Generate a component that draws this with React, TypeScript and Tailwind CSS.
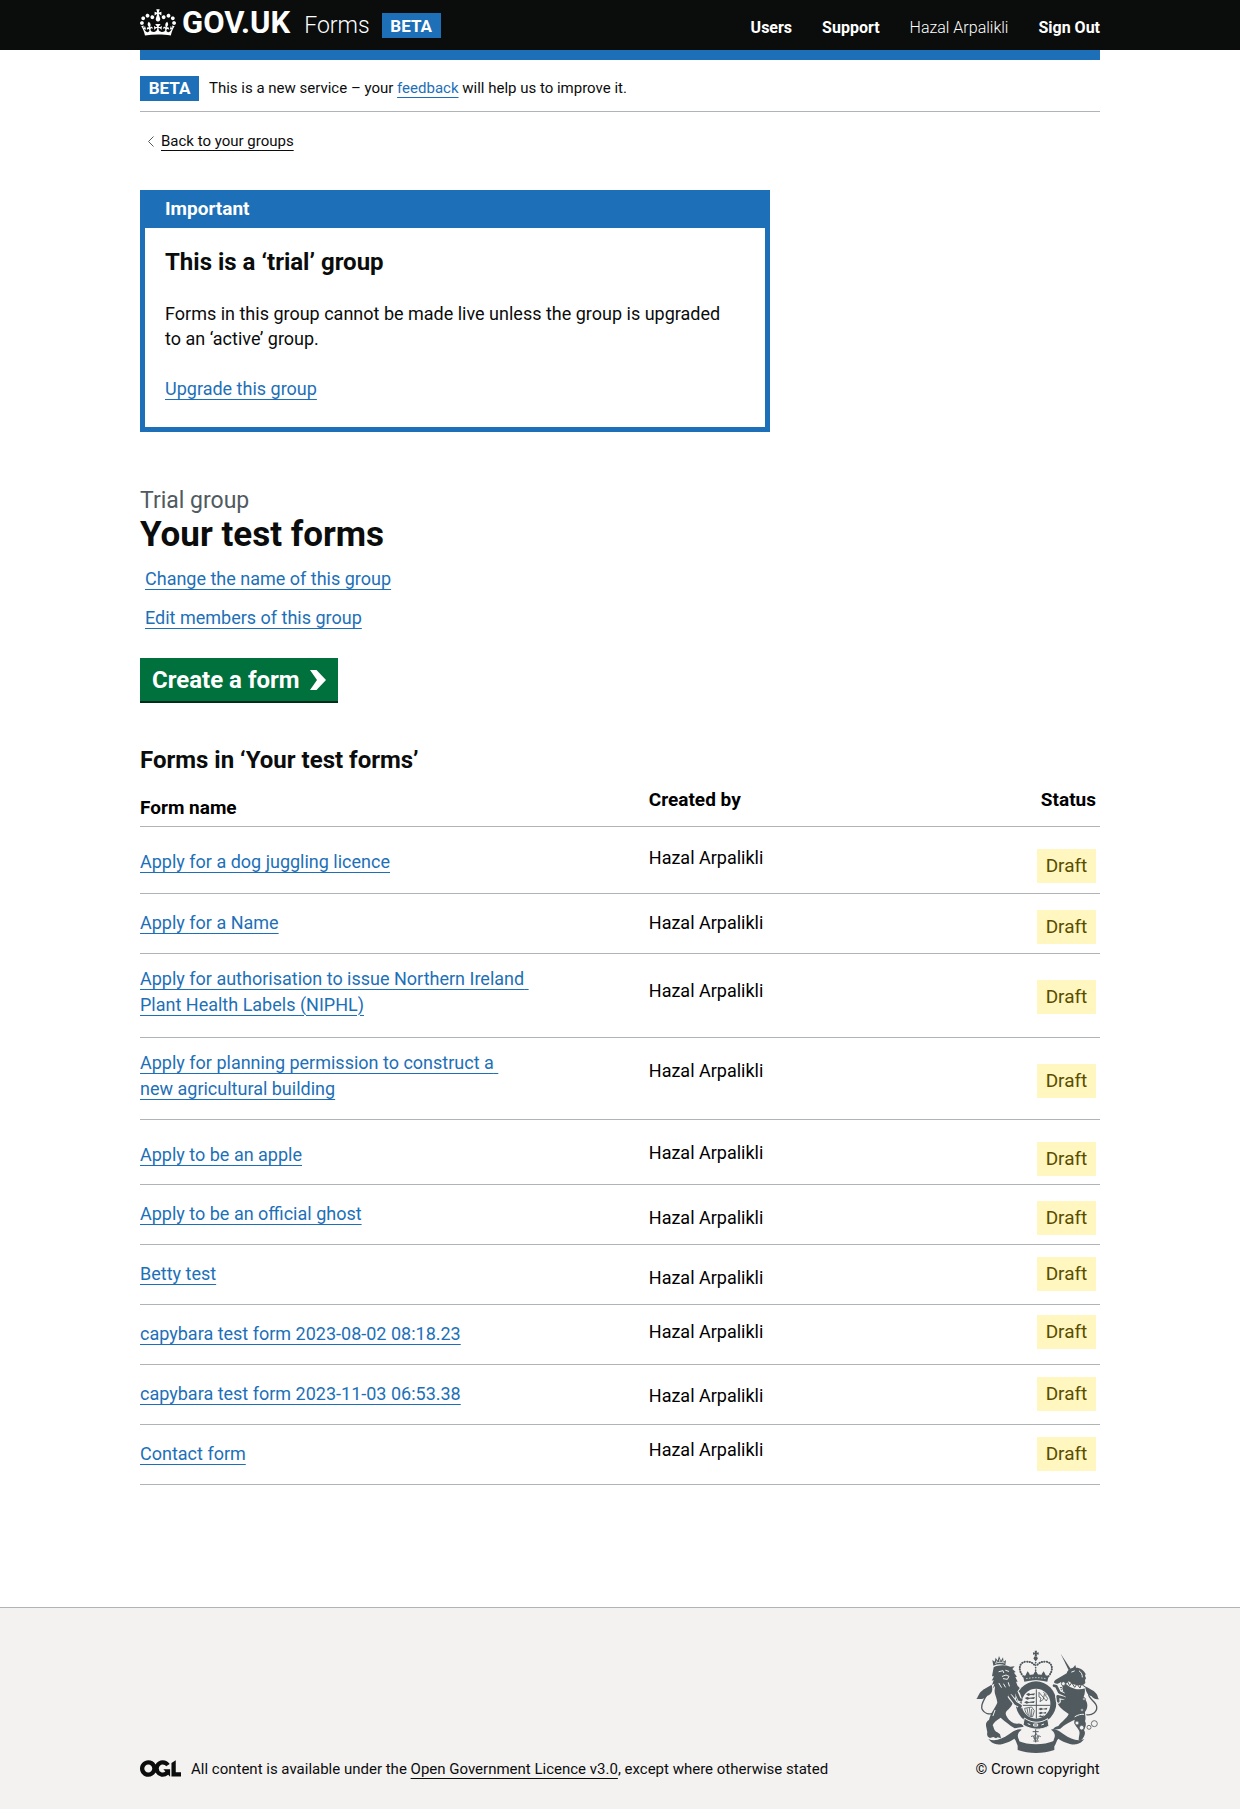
import type { ReactNode } from 'react';

type Form = {
  lines: string[];
  height: string;
  namePad: string;
  authorPad: string;
  statusPad: string;
};

const forms: Form[] = [
  { lines: ['Apply for a dog juggling licence'], height: 'h-[67px]', namePad: 'pt-5.5', authorPad: 'pt-4.5', statusPad: 'pt-5.5' },
  { lines: ['Apply for a Name'], height: 'h-[60px]', namePad: 'pt-4', authorPad: 'pt-4', statusPad: 'pt-4' },
  { lines: ['Apply for authorisation to issue Northern Ireland', 'Plant Health Labels (NIPHL)'], height: 'h-[84px]', namePad: 'pt-3', authorPad: 'pt-6', statusPad: 'pt-6.5' },
  { lines: ['Apply for planning permission to construct a', 'new agricultural building'], height: 'h-[82px]', namePad: 'pt-3', authorPad: 'pt-5', statusPad: 'pt-6.5' },
  { lines: ['Apply to be an apple'], height: 'h-[65px]', namePad: 'pt-5.5', authorPad: 'pt-5', statusPad: 'pt-5.5' },
  { lines: ['Apply to be an official ghost'], height: 'h-[60px]', namePad: 'pt-4', authorPad: 'pt-5', statusPad: 'pt-4' },
  { lines: ['Betty test'], height: 'h-[60px]', namePad: 'pt-4', authorPad: 'pt-5', statusPad: 'pt-3' },
  { lines: ['capybara test form 2023-08-02 08:18.23'], height: 'h-[60px]', namePad: 'pt-4', authorPad: 'pt-3.5', statusPad: 'pt-2.5' },
  { lines: ['capybara test form 2023-11-03 06:53.38'], height: 'h-[60px]', namePad: 'pt-4', authorPad: 'pt-4.5', statusPad: 'pt-3' },
  { lines: ['Contact form'], height: 'h-[60px]', namePad: 'pt-4', authorPad: 'pt-3', statusPad: 'pt-3' },
];

function Crown() {
  return (
    <svg aria-hidden="true" viewBox="0 0 132 97" className="h-[27px] w-9 shrink-0" fill="currentColor">
      <path d="M25 30.2c3.5 1.5 7.7-.2 9.1-3.7 1.5-3.6-.2-7.8-3.9-9.2-3.6-1.4-7.6.3-9.1 3.9-1.4 3.5.3 7.5 3.9 9zM9 39.5c3.6 1.5 7.8-.2 9.2-3.7 1.5-3.6-.2-7.8-3.9-9.1-3.6-1.5-7.6.2-9.1 3.8-1.4 3.5.3 7.5 3.8 9zM4.4 57.2c3.5 1.5 7.7-.2 9.1-3.8 1.5-3.6-.2-7.7-3.9-9.1-3.5-1.5-7.6.3-9.1 3.8-1.4 3.5.3 7.6 3.9 9.1zm38.3-21.4c3.5 1.5 7.7-.2 9.1-3.8 1.5-3.6-.2-7.7-3.9-9.1-3.6-1.5-7.6.3-9.1 3.8-1.3 3.6.4 7.7 3.9 9.1zm64.4-5.6c-3.6 1.5-7.8-.2-9.1-3.7-1.5-3.6.2-7.8 3.8-9.2 3.6-1.4 7.7.3 9.2 3.9 1.3 3.5-.4 7.5-3.9 9zm15.9 9.3c-3.6 1.5-7.7-.2-9.1-3.7-1.5-3.6.2-7.8 3.7-9.1 3.6-1.5 7.7.2 9.2 3.8 1.5 3.5-.3 7.5-3.8 9zm4.7 17.7c-3.6 1.5-7.8-.2-9.2-3.8-1.5-3.6.2-7.7 3.9-9.1 3.6-1.5 7.7.3 9.2 3.8 1.3 3.5-.4 7.6-3.9 9.1zM89.3 35.8c-3.6 1.5-7.8-.2-9.2-3.8-1.4-3.6.2-7.7 3.9-9.1 3.6-1.5 7.7.3 9.2 3.8 1.4 3.6-.3 7.7-3.9 9.1zM69.7 17.7l8.9 4.7V9.3l-8.9 2.8c-.2-.3-.5-.6-.9-.9L72.4 0H59.6l3.5 11.2c-.3.3-.6.5-.9.9l-8.8-2.8v13.1l8.8-4.7c.3.3.6.7.9.9l-5 15.4v.1c-.2.8-.4 1.6-.4 2.4 0 4.1 3.1 7.5 7 8.1h.2c.3 0 .7.1 1 .1.4 0 .7 0 1-.1h.2c4-.6 7.1-4.1 7.1-8.1 0-.8-.1-1.7-.4-2.4V34l-5.1-15.4c.4-.2.7-.6 1-.9zM66 92.8c16.9 0 32.8 1.1 47.1 3.2 4-16.9 8.9-26.7 14-33.5l-9.6-3.4c1 4.9 1.1 7.2 0 10.2-1.5-1.4-3-4.3-4.2-8.7L108.6 76c2.8-2 5-3.2 7.5-3.3-4.4 9.4-10 11.9-13.6 11.2-4.3-.8-6.3-4.6-5.6-7.9 1-4.7 5.7-5.9 8-.5 4.3-8.7-3-11.4-7.6-8.8 7.1-7.2 7.9-13.5 2.1-21.1-8 6.1-8.1 12.3-4.5 20.8-4.7-5.4-12.1-2.5-9.5 6.2 3.4-5.2 7.9-2 7.2 3.1-.6 4.3-6.4 7.8-13.5 7.2-10.3-.9-10.9-8-11.2-13.8 2.5-.5 7.1 1.8 11 7.3L80.2 60c-4.1 4.4-8 5.3-12.3 5.4 1.4-4.4 8-11.6 8-11.6H55.5s6.4 7.2 7.9 11.6c-4.2-.1-8-1-12.3-5.4l1.4 16.4c3.9-5.5 8.5-7.7 10.9-7.3-.3 5.8-.9 12.8-11.1 13.8-7.2.6-12.9-2.9-13.5-7.2-.7-5 3.8-8.3 7.1-3.1 2.7-8.7-4.6-11.6-9.4-6.2 3.7-8.5 3.6-14.7-4.6-20.8-5.8 7.6-5 13.9 2.2 21.1-4.7-2.6-11.9.1-7.7 8.8 2.3-5.5 7.1-4.2 8.1.5.7 3.3-1.3 7.1-5.7 7.9-3.5.7-9-1.8-13.5-11.2 2.5.1 4.7 1.3 7.5 3.3l-4.7-15.4c-1.2 4.4-2.7 7.2-4.3 8.7-1.1-3-.9-5.3 0-10.2l-9.5 3.4c5 6.9 9.9 16.7 14 33.5 14.8-2.1 30.8-3.2 47.7-3.2z" />
    </svg>
  );
}

function OglMark() {
  return (
    <svg role="img" aria-label="Open Government Licence" viewBox="0 0 483.2 195.7" className="h-[17px] w-[41px] shrink-0 text-[#0b0c0c]" fill="currentColor">
      <path d="M421.5 142.8V.1l-50.7 32.3v161.1h112.4v-50.7zm-122.3-9.6A47.12 47.12 0 0 1 221 97.8c0-26 21.1-47.1 47.1-47.1 16.7 0 31.4 8.7 39.7 21.8l42.7-27.2A97.63 97.63 0 0 0 268.1 0c-36.5 0-68.3 20.1-85.1 49.7A98 98 0 0 0 97.8 0C43.9 0 0 43.9 0 97.8s43.9 97.8 97.8 97.8c36.5 0 68.3-20.1 85.1-49.7a97.76 97.76 0 0 0 149.6 25.4l19.4 22.2h3v-87.8h-80l24.3 27.5zM97.8 145c-26 0-47.1-21.1-47.1-47.1s21.1-47.1 47.1-47.1 47.1 21.1 47.1 47.1S123.8 145 97.8 145" />
    </svg>
  );
}

function RoyalArms() {
  const light = '#f3f2f1';
  const dark = '#505a5f';
  return (
    <svg aria-hidden="true" viewBox="0 18 375 312" className="h-26 w-[125px]" fill={dark}>
      {/* ribbon */}
      <path d="M40 285c18 8 40 2 62-14 12-9 24-18 38-14-12 8-14 18-9 28 4 9 2 14-1 22-6-8-6-18-12-23-12 8-36 20-54 17-10-2-18-8-24-16z" />
      <path d="M328 285c-18 8-40 2-62-14-12-9-24-18-38-14 12 8 14 18 9 28-4 9-2 14 1 22 6-8 6-18 12-23 12 8 36 20 54 17 10-2 18-8 24-16z" />
      <path d="M128 290c34 14 76 14 110 0v28c-34 12-76 12-110 0z" />

      {/* crown over the shield */}
      <path d="M179 20h7l-1 6 6-1v7l-6-1 1 6h-7l1-6-6 1v-7l6 1z" />
      <circle cx="182" cy="43" r="6" />
      <path d="M145 97c-18-20-12-43 8-44 13-1 24 5 27 14M220 97c18-20 12-43-8-44-13-1-24 5-27 14" fill="none" stroke={dark} strokeWidth="6" strokeLinecap="round" strokeDasharray="1 6.5" />
      <path d="M182 48v40" fill="none" stroke={dark} strokeWidth="5" strokeLinecap="round" strokeDasharray="1 6.5" />
      <path d="M152 97c0-7 3-9 6-15 4 6 7 8 6 13l11 1c-1-6 3-10 7-16 4 6 8 10 7 16l11-1c-1-5 2-7 6-13 3 6 6 8 6 15z" />
      <path d="M144 96c24-6 54-6 77 0l-4 17c-22-5-47-5-69 0z" />
      <path d="M153 104c20-4 40-4 60 0" fill="none" stroke={light} strokeWidth="2" strokeDasharray="5 4" />

      {/* lion */}
      <path d="M55 65l-3-17 7 5 3-12 6 9 4-14 6 14 6-10 2 13 7-5-2 16c-12-4-24-4-36 1z" />
      <path d="M60 58c10-4 20-4 29-1M64 50l2 5M74 46v7M84 49l-1 5" fill="none" stroke={light} strokeWidth="2.5" />
      <path d="M56 70c14-7 32-8 50-2l13-1-7 8 10 9-5 2 9 12-5 1 7 14-5 0 5 13c6 4 8 9 8 15l-4 5 14 24c5 3 12 7 10 12 6 4 2 8-3 8-5-2-6-3-10-8-12-4-22-11-29-20 2 17-5 27-16 36-9 8-6 14-2 21 8 12 18 21 32 20 8-1 15 2 18 9l-27 5c-16-10-28-20-42-32-11 7-21 14-24 23 5 9 4 17 14 21l8 6 3 12-10-3-5 3-8-4-10 3c-8-3-10-10-8-17l-4-20c-1-8 3-14 9-17 5-22 18-36 25-52-2-17-9-25-8-39l1-11-6 7 4-14-7 4 5-15-6 2 7-13-6 0z" />
      <path d="M72 83l12-3 2 6M92 79l9 3M82 97l11-4 9 4-5 9-12-2M72 118l7 12M86 120l5 9M100 116l3 10M54 215l6-16" fill="none" stroke={light} strokeWidth="3" strokeLinecap="round" />
      <path d="M53 208c-12 4-25 0-31-11-10-18 15-38 15-54 0-11-12-8-12 2" fill="none" stroke={dark} strokeWidth="4" />
      <path d="M50 122c5 18 0 29-13 33-7 8-13 11-33 10 5-4 3-7 7-12 6-14 18-18 39-31z" />

      {/* unicorn */}
      <path d="M257 29l30 46-6 4z" />
      <path d="M275 88c2-9 9-15 19-17l7-8 2 8c13 0 24 8 29 19l-2 5 3 8-3 5 1 9-4 4c4 16 4 26-1 38 13 16 15 31 4 45 0 11 4 19 0 28 5 8 2 16-3 27 6 8 2 17-6 28l-10 2c0-14 6-22 0-31-5-12-17-16-12-31-14 6-30 14-43 27l-22 4c2-8 9-10 16-12 10-14 25-22 31-36-13-9-31-21-35-36l6-32 12-1c0-12-4-22-6-27-6 3-10 7-18 5-5-4-3-8 2-12z" />
      <path d="M277 116c14 14 36 17 52 11" fill="none" stroke={light} strokeWidth="12" />
      <path d="M276 110l8 15 6-9 9 14 7-10 9 12 4-12 11 9" fill="none" stroke={dark} strokeWidth="3" />
      <path d="M290 84l8-3M313 81c7 5 9 11 9 18M300 218c9-6 19-8 26-7" fill="none" stroke={light} strokeWidth="3" strokeLinecap="round" />
      <path d="M334 212c18 3 33-8 31-24-2-15-24-23-24-37 0-10 11-10 14 2" fill="none" stroke={dark} strokeWidth="4" />
      <path d="M330 127c3 18 8 27 20 30 6 8 11 9 23 9-6-3-3-11-10-18-8-10-21-14-33-21z" />
      <g fill={light} stroke={dark} strokeWidth="2.5">
        <circle cx="265" cy="119" r="6" /><circle cx="258" cy="134" r="4" /><circle cx="327" cy="165" r="4" /><circle cx="321" cy="198" r="4" />
        <circle cx="306" cy="237" r="6" /><circle cx="320" cy="251" r="7" /><circle cx="342" cy="250" r="6" /><circle cx="358" cy="239" r="9" />
      </g>

      {/* garter and shield */}
      <ellipse cx="183" cy="176" rx="64" ry="67" fill={light} />
      <ellipse cx="183" cy="176" rx="61" ry="64" />
      <ellipse cx="183" cy="179" rx="43" ry="45" fill={light} />
      <path d="M141 184h84M184 136v88" fill="none" stroke={dark} strokeWidth="3" />
      <path d="M153 151l8-4 5 3 14-2-3 6-10-1-7 3zM149 162l8-3 6 2 17-2-3 6-12-1-8 3zM147 175l8-4 6 3 18-3-2 6-14-1-8 3zM190 195l8-4 6 3 13-3-2 6-10-1-8 3zM190 207l8-4 6 3 10-3-2 6-8-1-8 3zM190 217l7-3 4 2 6-2-2 5-7 1z" />
      <path d="M192 145l22 26 4-8-10-12-3 15-10 7 3-11-6-3zM205 145l10 8" fill="none" stroke={dark} strokeWidth="2.5" />
      <path d="M149 193l21-4 8 11-5 18c-14 0-21-8-24-25zM156 193l4 20M163 192l3 24M170 195v22" fill="none" stroke={dark} strokeWidth="2.5" />
      <path d="M148 222c22 16 48 17 70 2l4 22c-24 14-52 12-78-3z" stroke={light} strokeWidth="3" />
      <path d="M158 239l8 3M176 240h12v6h-12zM199 243l8-3" fill="none" stroke={light} strokeWidth="3" />

      {/* forelegs resting on the garter */}
      <g fill="none" strokeLinecap="round" strokeLinejoin="round">
        <path d="M106 158l16 20 14 8M128 150l6 18M262 150l-9-5-9-18-7-2M264 160l-16-3 2 15" stroke={light} strokeWidth="15" />
        <path d="M104 154l18 24 14 8M136 186l-3 6M124 146l9 20 5 2" stroke={dark} strokeWidth="9" />
        <path d="M268 152l-15-7-9-18-7-2M268 162l-20-5 2 15" stroke={dark} strokeWidth="8" />
      </g>

      {/* pendant */}
      <path d="M182 256v39M173 263h18M183 269c-8 7-8 12-3 19M183 269c9 7 8 13 3 19M168 278c7-5 12 0 11 7M197 278c-7-5-12 0-11 7M175 291h16" fill="none" stroke={dark} strokeWidth="3" />
    </svg>
  );
}

function Beta() {
  return <strong className="flex h-[25px] w-[59px] shrink-0 items-center justify-center bg-[#1d70b8] text-[17px] font-bold text-white">BETA</strong>;
}

function Link({ children }: { children: ReactNode }) {
  return <a href="#" className="text-[#1d70b8] underline decoration-1 underline-offset-4">{children}</a>;
}

function Container({ className, children }: { className?: string; children: ReactNode }) {
  return <div className={`mx-auto w-full max-w-[1000px] px-5 ${className ?? ''}`}>{children}</div>;
}

export default function App() {
  return (
    <div className="flex min-h-screen flex-col bg-white font-['Roboto',sans-serif] text-[18px] leading-[26px] text-[#0b0c0c]">
      <header className="bg-[#0b0c0c] text-white">
        <Container className="flex h-[50px] items-start justify-between">
          <div className="flex">
            <a href="#" className="flex items-start gap-1.5 pt-[9px]">
              <Crown />
              <span className="text-[31px] leading-7 font-bold">GOV.UK</span>
            </a>
            <a href="#" className="ml-3.5 pt-3 text-[23px] leading-7 font-light">Forms</a>
            <div className="ml-3 pt-[13px]"><Beta /></div>
          </div>
          <nav className="flex gap-[30px] pt-[15px] text-[16px] leading-[26px] font-bold">
            <a href="#">Users</a>
            <a href="#">Support</a>
            <a href="#" className="font-light">Hazal Arpalikli</a>
            <a href="#">Sign Out</a>
          </nav>
        </Container>
      </header>

      <Container>
        <div className="h-2.5 bg-[#1d70b8]" />
        <div className="flex items-center gap-2.5 border-b border-[#b1b4b6] pt-[15px] pb-2.5 text-[15px]">
          <Beta />
          <p>This is a new service – your <Link>feedback</Link> will help us to improve it.</p>
        </div>
        <a href="#" className="mt-4 ml-2 flex items-center gap-[7px] text-[15px]">
          <svg aria-hidden="true" viewBox="0 0 6 11" className="h-[11px] w-1.5 shrink-0" fill="none" stroke="#505a5f"><path d="M5.5.5l-5 5 5 5" /></svg>
          <span className="underline underline-offset-4">Back to your groups</span>
        </a>
      </Container>

      <main>
        <Container>
          <section aria-labelledby="notice" className="mt-9 max-w-[630px] border-5 border-t-0 border-[#1d70b8]">
            <h2 id="notice" className="bg-[#1d70b8] px-5 py-1.5 text-[19px] font-bold text-white">Important</h2>
            <div className="px-5 pt-5 pb-[25px]">
              <h3 className="text-[24px] leading-7 font-bold">This is a ‘trial’ group</h3>
              <p className="mt-[25px] pr-4 leading-[25px]">Forms in this group cannot be made live unless the group is upgraded to an ‘active’ group.</p>
              <p className="mt-[25px]"><Link>Upgrade this group</Link></p>
            </div>
          </section>

          <p className="mt-[54px] text-[23px] leading-[30px] text-[#505a5f]">Trial group</p>
          <h1 className="text-[35px] leading-[38px] font-bold">Your test forms</h1>
          <div className="mt-3 ml-[5px] flex flex-col items-start gap-[13px]">
            <Link>Change the name of this group</Link>
            <Link>Edit members of this group</Link>
          </div>

          <button type="button" className="mt-[27px] flex h-[43px] items-center gap-2.5 bg-[#00703c] px-3 text-[24px] font-bold text-white shadow-[0_2px_0_#002d18]">
            Create a form
            <svg aria-hidden="true" viewBox="0 0 16 20" className="h-5 w-4" fill="currentColor"><path d="M0 0h6.500L16 10 6.500 20H0l7-10z" /></svg>
          </button>

          <h2 className="mt-11 text-[24px] leading-[30px] font-bold">Forms in ‘Your test forms’</h2>

          <table className="w-full table-fixed text-left text-black">
            <thead>
              <tr className="h-[51px] border-b border-[#b1b4b6] align-top text-[19px]">
                <th scope="col" className="w-[53%] pt-5">Form name</th>
                <th scope="col" className="w-[34%] pt-3">Created by</th>
                <th scope="col" className="w-[13%] pt-3 pr-1 text-right">Status</th>
              </tr>
            </thead>
            <tbody>
              {forms.map((form) => (
                <tr key={form.lines[0]} className={`border-b border-[#b1b4b6] align-top ${form.height}`}>
                  <td className={form.namePad}>
                    <Link>
                      {form.lines[0]}
                      {form.lines[1] && <>{'\u00a0'}<br />{form.lines[1]}</>}
                    </Link>
                  </td>
                  <td className={form.authorPad}>Hazal Arpalikli</td>
                  <td className={`pr-1 ${form.statusPad}`}>
                    <strong className="ml-auto flex h-[34px] w-[59px] items-center justify-center bg-[#fff7bf] text-[19px] font-normal text-[#594d00]">Draft</strong>
                  </td>
                </tr>
              ))}
            </tbody>
          </table>
        </Container>
      </main>

      <footer className="mt-[122px] grow border-t border-[#b1b4b6] bg-[#f3f2f1] text-[15px]">
        <Container className="flex items-end justify-between gap-6 pt-[42px] pb-[29px]">
          <div className="flex items-center gap-2.5">
            <OglMark />
            <p>All content is available under the <a href="#" className="underline underline-offset-4">Open Government Licence v3.0</a>, except where otherwise stated</p>
          </div>
          <a href="#" className="flex shrink-0 flex-col items-center gap-0.5">
            <RoyalArms />
            <span>© Crown copyright</span>
          </a>
        </Container>
      </footer>
    </div>
  );
}
